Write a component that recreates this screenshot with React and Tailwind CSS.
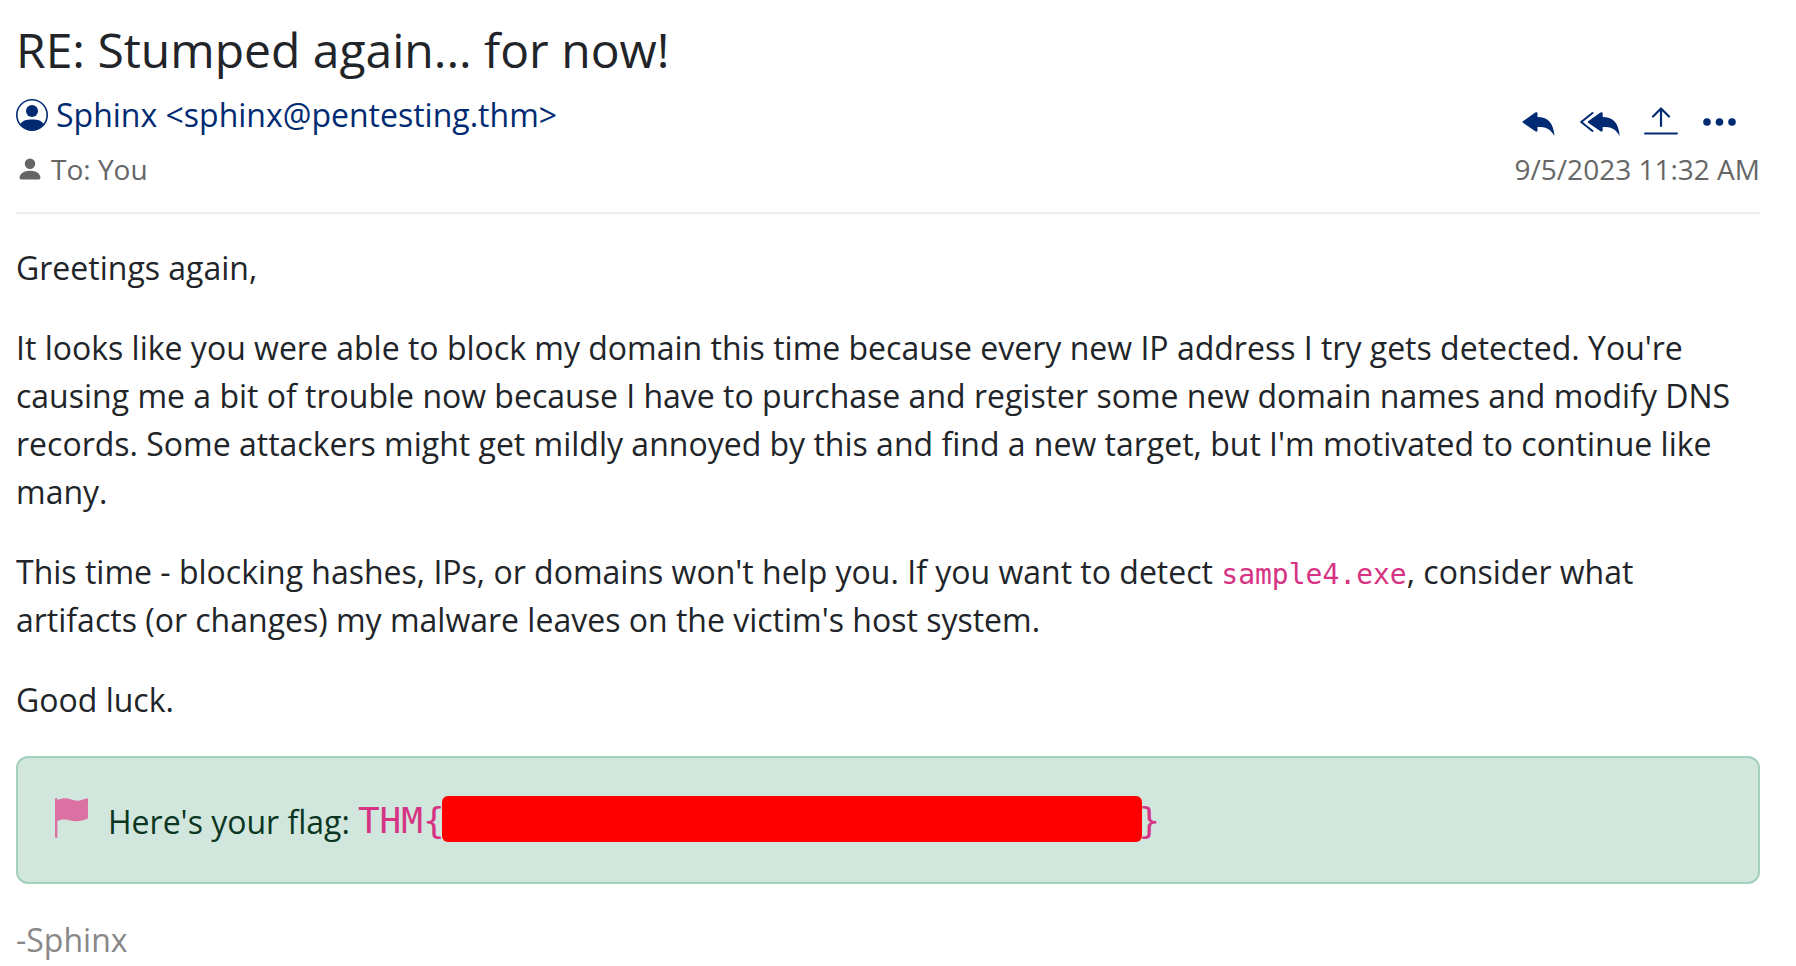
import { BsPersonFill } from "react-icons/bs";

function PersonCircle() {
  return (
    <svg viewBox="0 0 32 32" className="h-8 w-8 shrink-0" fill="currentColor" aria-hidden="true">
      <circle cx="16" cy="16" r="15.2" fill="none" stroke="currentColor" strokeWidth="1.6" />
      <circle cx="16" cy="12" r="6" />
      <path d="M4 25.5C6 21.8 10 20.5 16 20.5S26 21.8 28 25.5A15.6 15.6 0 0 1 4 25.5Z" />
    </svg>
  );
}

const ARROW =
  "M.9 9.300 13.300.5Q15.500-.5 15.500 1.500V5C25 5 31.500 10 32.500 24C28 16.500 24 15 15.500 15V18.300Q15.500 20.300 13.300 19.300L.9 10.700Q0 10 .9 9.300Z";

function Reply() {
  return (
    <svg viewBox="0 0 34 30" className="h-[30px] w-[34px]" fill="currentColor" aria-hidden="true">
      <path d={ARROW} transform="translate(0 5)" />
    </svg>
  );
}

function ReplyAll() {
  return (
    <svg viewBox="0 0 40 30" className="h-[30px] w-10" fill="currentColor" aria-hidden="true">
      <path d="M12.500 6 1.200 15 12.500 24" fill="none" stroke="currentColor" strokeWidth="2" strokeLinecap="round" strokeLinejoin="round" />
      <path d={ARROW} transform="translate(7.2 5)" />
    </svg>
  );
}

function Upload() {
  return (
    <svg viewBox="0 0 34 30" className="h-[30px] w-[34px]" fill="none" stroke="currentColor" strokeWidth="2.2" strokeLinecap="round" strokeLinejoin="round" aria-hidden="true">
      <path d="M17 19V1.500M9 9.500l8-8 8 8M1.100 26.500h31.800" />
    </svg>
  );
}

function Dots() {
  return (
    <svg viewBox="0 0 34 30" className="h-[30px] w-[34px]" fill="currentColor" aria-hidden="true">
      <circle cx="5" cy="15" r="3.800" />
      <circle cx="17.500" cy="15" r="3.800" />
      <circle cx="30" cy="15" r="3.800" />
    </svg>
  );
}

function Flag() {
  return (
    <svg viewBox="-1 0 34 40" className="h-10 w-[34px] shrink-0" fill="currentColor" aria-hidden="true">
      <path d="M0 1.200A1.200 1.200 0 0 1 2.400 1.200V2C7 0 11 0 14 .8C18 2 21 3.200 25 2.400C28 1.800 30 .7 31.500 .3Q33 0 33 1.500V19.500Q33 20.500 32 21C28 22.500 23 24 18 23C12 21.500 8 20.500 2.400 23V38.800A1.200 1.200 0 0 1 0 38.800Z" />
    </svg>
  );
}

export default function App() {
  return (
    <main className="bg-white pt-[21px] pr-9 pl-4 font-['Open_Sans','Noto_Sans',sans-serif] text-[32px] leading-[48px] text-[#212529]">
      <header className="border-b-2 border-[#eeeeee] pb-[19px]">
        <h1 className="text-[48px] leading-[58px]">RE: Stumped again... for now!</h1>
        <div className="flex items-end justify-between pt-3">
          <div>
            <a href="mailto:sphinx@pentesting.thm" className="flex items-center gap-2 text-[#002b73]">
              <PersonCircle />
              Sphinx &lt;sphinx@pentesting.thm&gt;
            </a>
            <p className="mt-1.5 flex items-center gap-[7px] text-[28px] text-[#666666]">
              <BsPersonFill className="h-7 w-7" />
              To: You
            </p>
          </div>
          <div className="flex flex-col items-end">
            <div className="mr-6 mb-2 flex items-center gap-6 text-[#002b73]">
              <button type="button" aria-label="Reply"><Reply /></button>
              <button type="button" aria-label="Reply all"><ReplyAll /></button>
              <button type="button" aria-label="Forward"><Upload /></button>
              <button type="button" aria-label="More actions"><Dots /></button>
            </div>
            <time dateTime="2023-09-05T11:32" className="text-[28px] text-[#666666]">9/5/2023 11:32 AM</time>
          </div>
        </div>
      </header>
      <article className="flex flex-col gap-8 pt-[30px]">
        <p>Greetings again,</p>
        <p>
          It looks like you were able to block my domain this time because every new IP address I try gets detected.
          You're causing me a bit of trouble now because I have to purchase and register some new domain names and
          modify DNS records. Some attackers might get mildly annoyed by this and find a new target, but I'm motivated
          to continue like many.
        </p>
        <p>
          This time - blocking hashes, IPs, or domains won't help you. If you want to detect{" "}
          <code className="font-['DejaVu_Sans_Mono',monospace] text-[28px] leading-8 text-[#d63384]">sample4.exe</code>, consider
          what artifacts (or changes) my malware leaves on the victim's host system.
        </p>
        <p>Good luck.</p>
        <div className="flex items-start rounded-xl border-2 border-[#a3cfbb] bg-[#d1e7dd] px-9 pt-10 pb-9 text-[#0a3622]">
          <span className="mr-5 text-[#db70a2]"><Flag /></span>
          <span className="mr-2">Here's your flag:</span>
          <code className="flex items-start font-['DejaVu_Sans_Mono',monospace] text-[36px] leading-[46px] text-[#d63384]">
            THM&#123;
            <span className="z-10 -mt-[2px] -mr-[3px] -ml-[3px] h-[46px] w-[700px] rounded-md bg-[#ff0000]" />
            &#125;
          </code>
        </div>
        <p className="text-[#888888]">-Sphinx</p>
      </article>
    </main>
  );
}
